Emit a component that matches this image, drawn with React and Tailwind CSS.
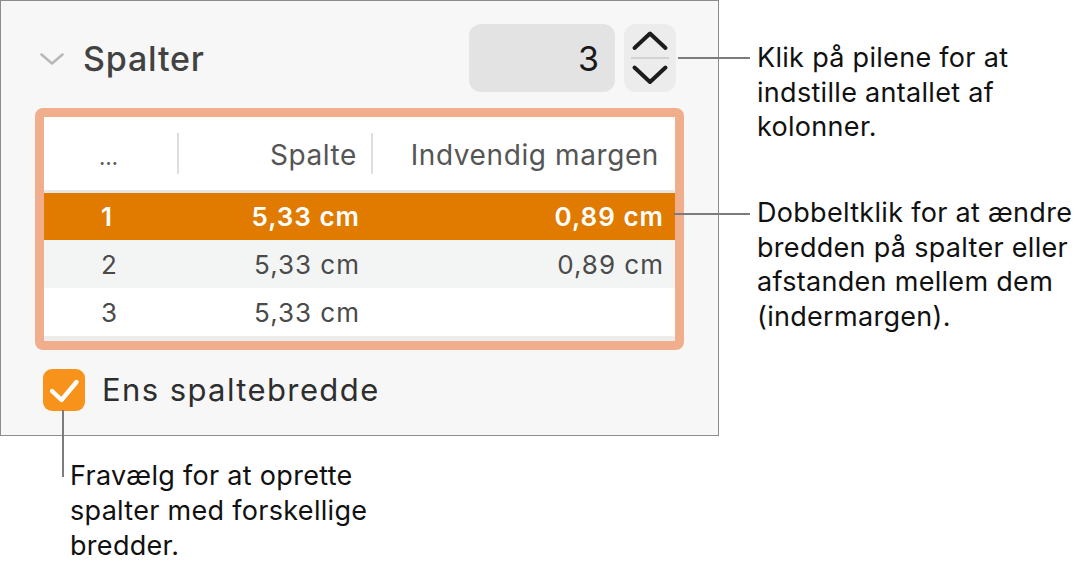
import React from 'react';

const rows = [
  { n: '1', width: '5,33 cm', gap: '0,89 cm', selected: true },
  { n: '2', width: '5,33 cm', gap: '0,89 cm', shaded: true },
  { n: '3', width: '5,33 cm', gap: '' },
];

const Callout = ({ className, lines }) => (
  <div className={`absolute text-[27px] leading-[34.5px] tracking-[0.3px] text-[#111] ${className}`}>
    {lines.map((l) => (
      <div key={l}>{l}</div>
    ))}
  </div>
);

const App = () => {
  return (
    <div
      className="relative w-[1080px] h-[564px] bg-white overflow-hidden"
      style={{ fontFamily: 'Inter, "Noto Sans", sans-serif' }}
    >
      {/* Inspector panel */}
      <div className="w-[719px] h-[436px] border border-[#8c8c8c] bg-[#f7f7f7] pt-[23px]">
        {/* Section heading */}
        <div className="flex items-center h-[68px] pl-[39px] pr-[42px]">
          <svg width="24" height="12" viewBox="0 0 24 12" className="shrink-0 mt-[2px]">
            <path d="M1.5 1.5 L12 10.5 L22.5 1.5" fill="none" stroke="#b9b9b9" strokeWidth="2.6" strokeLinecap="round" strokeLinejoin="round" />
          </svg>
          <span className="ml-[19px] text-[34px] font-medium text-[#424242] tracking-[0.8px]">Spalter</span>
          <div className="ml-auto flex items-center gap-[9px]">
            <div className="w-[146px] h-[68px] rounded-[12px] bg-[#e3e3e3] flex items-center justify-end pr-[16px] text-[34px] text-[#1a1a1a]">
              3
            </div>
            <div className="w-[52px] h-[68px] rounded-[12px] bg-[#ececec]">
              <svg width="52" height="68" viewBox="0 0 52 68">
                <path d="M10.5 24 L26 9.5 L41.5 24" fill="none" stroke="#1c1c1c" strokeWidth="4" strokeLinecap="round" strokeLinejoin="round" />
                <line x1="7" y1="34" x2="45" y2="34" stroke="#d2d2d2" strokeWidth="2" />
                <path d="M10.5 43.5 L26 58 L41.5 43.5" fill="none" stroke="#1c1c1c" strokeWidth="4" strokeLinecap="round" strokeLinejoin="round" />
              </svg>
            </div>
          </div>
        </div>

        {/* Columns table, highlighted */}
        <div className="ml-[34px] mt-[16px] w-[649px] h-[242px] border-[9px] border-[#f0ae8d] rounded-[8px] bg-white">
          <div className="flex items-center h-[73px] text-[28px] tracking-[0.6px] text-[#555]">
            <div className="w-[133px] h-full flex items-end pb-[22px] pl-[55px] text-[22px] leading-none">…</div>
            <div className="w-[2px] h-[41px] bg-[#dedede]" />
            <div className="w-[192px] text-right pr-[14px] pt-[2px]">Spalte</div>
            <div className="w-[2px] h-[41px] bg-[#dedede]" />
            <div className="flex-1 text-right pr-[16px] pt-[2px]">Indvendig margen</div>
          </div>
          <div className="h-[3px] bg-[#e6e6e6]" />
          {rows.map((r) => (
            <div
              key={r.n}
              className={`flex items-center text-[26px] tracking-[1px] ${
                r.selected
                  ? 'bg-[#e07b00] text-white font-semibold h-[47px]'
                  : r.shaded
                  ? 'bg-[#f3f4f4] text-[#4a4a4a] h-[48px]'
                  : 'bg-white text-[#4a4a4a] h-[48px]'
              }`}
            >
              <div className="w-[135px] pl-[57px]">{r.n}</div>
              <div className="w-[181px] text-right">{r.width}</div>
              <div className="flex-1 text-right pr-[11px]">{r.gap}</div>
            </div>
          ))}
          <div className="h-[5px] bg-[#ececec]" />
        </div>

        {/* Equal column width checkbox */}
        <div className="flex items-center mt-[17px] pl-[42px]">
          <div className="w-[42px] h-[42px] rounded-[9px] bg-[#f7931a] flex items-center justify-center">
            <svg width="42" height="42" viewBox="0 0 42 42">
              <path d="M9 22 L18.5 31 L33.5 13" fill="none" stroke="#fff" strokeWidth="4.4" strokeLinecap="round" strokeLinejoin="round" />
            </svg>
          </div>
          <span className="ml-[17px] text-[31px] tracking-[1.4px] text-[#2e2e2e]">Ens spaltebredde</span>
        </div>
      </div>

      {/* Leader lines */}
      <div className="absolute left-[678px] top-[57px] w-[72px] h-[2px] bg-[#7c7c7c]" />
      <div className="absolute left-[674px] top-[213px] w-[76px] h-[2px] bg-[#7c7c7c]" />
      <div className="absolute left-[62px] top-[410px] w-[2px] h-[67px] bg-[#7c7c7c]" />

      {/* Callouts */}
      <Callout className="left-[757px] top-[41px]" lines={['Klik på pilene for at', 'indstille antallet af', 'kolonner.']} />
      <Callout
        className="left-[757px] top-[196px]"
        lines={['Dobbeltklik for at ændre', 'bredden på spalter eller', 'afstanden mellem dem', '(indermargen).']}
      />
      <Callout
        className="left-[70px] top-[458px] leading-[35px]"
        lines={['Fravælg for at oprette', 'spalter med forskellige', 'bredder.']}
      />
    </div>
  );
};

export default App;
